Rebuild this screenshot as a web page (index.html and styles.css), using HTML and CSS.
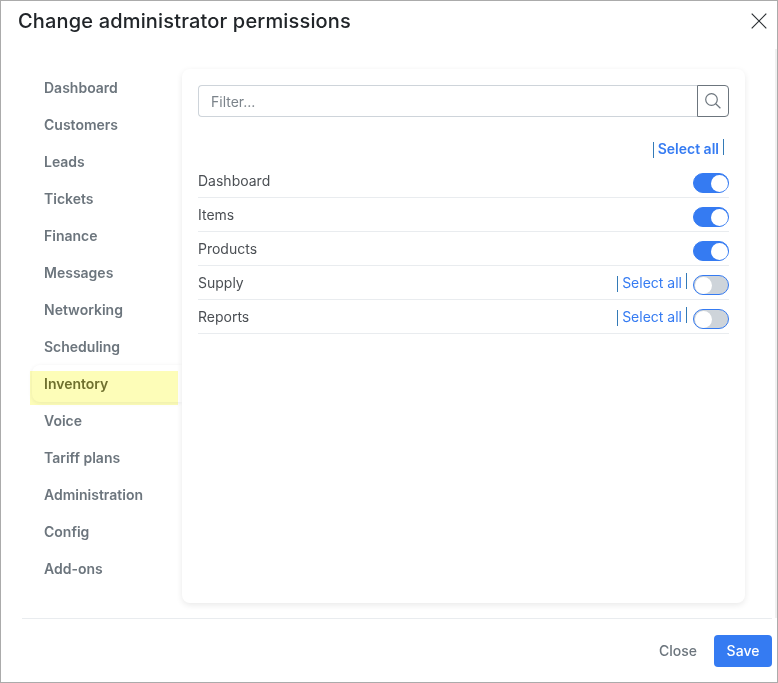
FILE: index.html
```html
<!DOCTYPE html>
<html lang="en">
<head>
<meta charset="utf-8">
<title>Change administrator permissions</title>
<link rel="stylesheet" href="styles.css">
</head>
<body>
<div class="modal">
  <header class="modal-header">
    <h1 class="title">Change administrator permissions</h1>
    <button class="close-icon" aria-label="Close dialog"><svg width="16" height="16" viewBox="0 0 16 16"><path d="M.7.7l14.6 14.6M15.300.7L.7 15.300"/></svg></button>
  </header>
  <main class="modal-body">
    <nav class="tabs">
      <a class="tab">Dashboard</a>
      <a class="tab">Customers</a>
      <a class="tab">Leads</a>
      <a class="tab">Tickets</a>
      <a class="tab">Finance</a>
      <a class="tab">Messages</a>
      <a class="tab">Networking</a>
      <a class="tab">Scheduling</a>
      <a class="tab active">Inventory</a>
      <a class="tab">Voice</a>
      <a class="tab">Tariff plans</a>
      <a class="tab">Administration</a>
      <a class="tab">Config</a>
      <a class="tab">Add-ons</a>
    </nav>
    <section class="panel">
      <div class="filter">
        <input class="filter-input" type="text" placeholder="Filter...">
        <button class="filter-button" aria-label="Search"><svg width="16" height="16" viewBox="0 0 16 16"><circle cx="6.500" cy="6.500" r="5.800"/><path d="M10.700 10.700l4.700 4.600"/></svg></button>
      </div>
      <div class="select-row"><a class="select-all strong">Select all</a></div>
      <div class="row"><span class="label">Dashboard</span><span class="toggle on"></span></div>
      <div class="row"><span class="label">Items</span><span class="toggle on"></span></div>
      <div class="row"><span class="label">Products</span><span class="toggle on"></span></div>
      <div class="row"><span class="label">Supply</span><a class="select-all">Select all</a><span class="toggle"></span></div>
      <div class="row"><span class="label">Reports</span><a class="select-all">Select all</a><span class="toggle"></span></div>
    </section>
  </main>
  <footer class="modal-footer">
    <button class="btn">Close</button>
    <button class="btn primary">Save</button>
  </footer>
</div>
</body>
</html>
```
FILE: styles.css
```css
* { box-sizing: border-box; }
body {
  margin: 0;
  font: 400 14px/20px Inter, "Liberation Sans", sans-serif;
  color: #4b4f54;
}
button { padding: 0; border: 0; background: none; font: inherit; color: inherit; }
svg { display: block; fill: none; stroke: currentColor; }
.modal {
  display: flex;
  flex-direction: column;
  width: 778px;
  height: 683px;
  border: 1px solid #ababab;
  background: #fff;
  overflow: hidden;
}
.modal-header {
  display: flex;
  justify-content: space-between;
  height: 48px;
  padding: 8px 10px 0 17px;
}
.title {
  margin: 0;
  font-size: 20px;
  line-height: 24px;
  font-weight: 500;
  letter-spacing: .16px;
  color: #212529;
}
.close-icon { height: 16px; margin-top: 4px; color: #2b2f33; stroke-width: 1.2; }
.modal-body {
  display: flex;
  height: 569px;
  padding: 20px 30px 15px 31px;
  border-right: 2px solid #f0f0f0;
}
.tabs { flex: 0 0 150px; }
.tab {
  display: flex;
  align-items: center;
  height: 37px;
  padding: 0 12px;
  border-radius: 8px 0 0 8px;
  font-weight: 600;
  color: #6c757d;
}
.tab.active {
  position: relative;
  box-shadow: 0 1px 4px rgba(0, 0, 0, .08);
  color: #70713f;
}
.tab.active::after {
  content: "";
  position: absolute;
  left: -2px;
  top: 6px;
  width: 148px;
  height: 34px;
  background: #fdfdb8;
  mix-blend-mode: multiply;
}
.panel {
  position: relative;
  flex: none;
  width: 563px;
  padding: 16px;
  border-radius: 8px;
  background: #fff;
  box-shadow: 0 2px 6px rgba(0, 0, 0, .09);
}
.filter { display: flex; height: 32px; }
.filter-input {
  flex: 1;
  min-width: 0;
  padding: 2px 12px 0;
  border: 1px solid #ced4da;
  border-right: 0;
  border-radius: 4px 0 0 4px;
  font: inherit;
}
.filter-input::placeholder { color: #7b838a; opacity: 1; }
.filter-button {
  display: flex;
  align-items: center;
  justify-content: center;
  width: 32px;
  border: 1px solid #6c757d;
  border-radius: 0 4px 4px 0;
  color: #6c757d;
  stroke-width: 1.2;
}
.select-row { display: flex; justify-content: flex-end; height: 47px; padding: 22px 5px 0 0; }
.select-all {
  display: flex;
  height: 20px;
  color: #357bf2;
}
.select-all::before, .select-all::after {
  content: "";
  width: 1px;
  height: 16px;
  background: #337ab7;
}
.select-all::before { margin: 3px 4px 0 0; }
.select-all::after { margin: 0 0 0 4px; }
.select-all.strong { font-weight: 600; }
.row {
  display: flex;
  height: 34px;
  padding-top: 7px;
  border-bottom: 1px solid #e9ecef;
}
.label { margin-right: auto; }
.toggle {
  width: 36px;
  height: 20px;
  margin: 2px 0 0 6px;
  padding: .5px;
  border: 1px solid #357bf2;
  border-radius: 10px;
  background: #ced4da;
}
.toggle::before {
  content: "";
  display: block;
  width: 17px;
  height: 17px;
  border-radius: 50%;
  background: #fff;
}
.toggle.on { background: #357bf2; }
.toggle.on::before { margin-left: auto; }
.modal-footer {
  display: flex;
  flex: 1;
  justify-content: flex-end;
  gap: 4px;
  margin: 0 5px 0 21px;
  padding-top: 16px;
  border-top: 1px solid #e9ecef;
}
.btn { height: 32px; padding: 0 13px; border-radius: 4px; font-weight: 500; color: #6c757d; }
.btn.primary { width: 58px; padding: 0; background: #357bf2; color: #fff; }
```
